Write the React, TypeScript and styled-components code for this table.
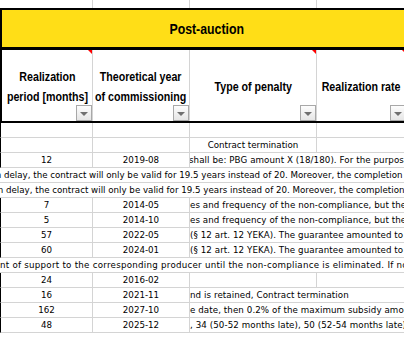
import React from 'react';
import styled, { createGlobalStyle } from 'styled-components';

const GRID = '#d4d4d4';
const COLUMNS = '93px 97px 127px 90px 60px';

const GlobalStyle = createGlobalStyle`
  html, body {
    margin: 0;
    padding: 0;
    background: #fff;
  }
`;

const Sheet = styled.div`
  width: 404px;
  height: 337px;
  overflow: hidden;
  background: #fff;
  color: #000;
  font-family: 'DejaVu Sans', Verdana, sans-serif;
`;

const Row = styled.div<{ $height: number }>`
  display: grid;
  grid-template-columns: ${COLUMNS};
  height: ${(p) => p.$height}px;
`;

const BlankCell = styled.div`
  border-right: 1px solid ${GRID};
`;

const Band = styled.div`
  height: 42px;
  box-sizing: border-box;
  border-top: 2px solid #000;
  border-bottom: 3px solid #000;
  border-left: 2px solid #000;
  background: #ffde17;
  display: flex;
  align-items: center;
  justify-content: center;
`;

// narrow bold face, close to the sheet's Calibri
const NarrowBold = styled.span`
  display: inline-block;
  white-space: nowrap;
  font-family: 'Liberation Sans', Arial, sans-serif;
  font-weight: bold;
  transform: scaleX(0.82);
`;

const BandTitle = styled(NarrowBold)`
  font-size: 15px;
  padding-left: 8px;
`;

const HeaderRow = styled(Row)`
  box-sizing: border-box;
  border-bottom: 2px solid #000;
`;

const HeadCell = styled.div<{ $first?: boolean }>`
  position: relative;
  box-sizing: border-box;
  border-right: 1px solid ${GRID};
  border-left: ${(p) => (p.$first ? '2px solid #000' : 'none')};
  display: flex;
  align-items: center;
  justify-content: center;
  padding-top: 3px;
  text-align: center;
`;

const HeadText = styled(NarrowBold)`
  font-size: 13px;
  line-height: 20px;
`;

const NoteMark = styled.span`
  position: absolute;
  top: 0;
  right: 0;
  width: 0;
  height: 0;
  border-top: 4px solid #ff0000;
  border-left: 4px solid transparent;
`;

const FilterButton = styled.span`
  position: absolute;
  right: 0;
  bottom: 0;
  width: 16px;
  height: 16px;
  box-sizing: border-box;
  border: 1px solid #a8a8a8;
  background: linear-gradient(#fdfdfd, #e6e6e6);
  display: flex;
  align-items: center;
  justify-content: center;
  &::after {
    content: '';
    border-left: 4px solid transparent;
    border-right: 4px solid transparent;
    border-top: 4px solid #707070;
    margin-top: 1px;
  }
`;

const DataRow = styled(Row)`
  font-size: 8.7px;
  line-height: 14px;
`;

const Cell = styled.div<{ $first?: boolean }>`
  box-sizing: border-box;
  border-bottom: 1px solid ${GRID};
  border-right: 1px solid ${GRID};
  border-left: ${(p) => (p.$first ? '1px solid #000' : 'none')};
  text-align: center;
  white-space: nowrap;
  overflow: hidden;
`;

const SpillCell = styled.div<{ $from: number }>`
  grid-column: ${(p) => p.$from} / -1;
  box-sizing: border-box;
  border-bottom: 1px solid ${GRID};
  white-space: nowrap;
  overflow: hidden;
  text-align: left;
`;

const SpillText = styled.span<{ $shift: number; $spacing?: number }>`
  display: inline-block;
  margin-left: ${(p) => p.$shift}px;
  letter-spacing: ${(p) => p.$spacing ?? 0}px;
`;

type SheetRow =
  | { kind: 'cells'; period?: string; year?: string; penalty?: string; spill?: boolean; shift?: number }
  | { kind: 'wide'; text: string; shift: number; spacing?: number };

const rows: SheetRow[] = [
  { kind: 'cells' },
  { kind: 'cells', penalty: 'Contract termination' },
  { kind: 'cells', period: '12', year: '2019-08', penalty: 'shall be: PBG amount X (18/180). For the purpose of', spill: true, shift: -1 },
  { kind: 'wide', text: 'in delay, the contract will only be valid for 19.5 years instead of 20. Moreover, the completion of', shift: -6.7 },
  { kind: 'wide', text: 'in delay, the contract will only be valid for 19.5 years instead of 20. Moreover, the completion of', shift: -4.7 },
  { kind: 'cells', period: '7', year: '2014-05', penalty: 'es and frequency of the non-compliance, but the', spill: true, shift: 0 },
  { kind: 'cells', period: '5', year: '2014-10', penalty: 'es and frequency of the non-compliance, but the', spill: true, shift: 0 },
  { kind: 'cells', period: '57', year: '2022-05', penalty: '(§ 12 art. 12 YEKA). The guarantee amounted to', spill: true, shift: 0 },
  { kind: 'cells', period: '60', year: '2024-01', penalty: '(§ 12 art. 12 YEKA). The guarantee amounted to', spill: true, shift: 0 },
  { kind: 'wide', text: 'nt of support to the corresponding producer until the non-compliance is eliminated. If non', shift: 0, spacing: 0.25 },
  { kind: 'cells', period: '24', year: '2016-02' },
  { kind: 'cells', period: '16', year: '2021-11', penalty: 'nd is retained, Contract termination', spill: true, shift: 0 },
  { kind: 'cells', period: '162', year: '2027-10', penalty: 'e date, then 0.2% of the maximum subsidy  amount', spill: true, shift: 0 },
  { kind: 'cells', period: '48', year: '2025-12', penalty: ', 34 (50-52 months late), 50 (52-54 months late)', spill: true, shift: 0 },
];

const headers = [
  { lines: ['Realization', 'period [months]'], note: true },
  { lines: ['Theoretical year', 'of commissioning'], note: false },
  { lines: ['Type of penalty'], note: true },
  { lines: ['Realization rate'], note: true },
];

function renderRow(row: SheetRow, i: number) {
  if (row.kind === 'wide') {
    return (
      <DataRow key={i} $height={15}>
        <SpillCell $from={1}>
          <SpillText $shift={row.shift} $spacing={row.spacing}>{row.text}</SpillText>
        </SpillCell>
      </DataRow>
    );
  }
  return (
    <DataRow key={i} $height={15}>
      <Cell $first>{row.period}</Cell>
      <Cell>{row.year}</Cell>
      {row.spill ? (
        <SpillCell $from={3}>
          <SpillText $shift={row.shift ?? 0} $spacing={0.08}>{row.penalty}</SpillText>
        </SpillCell>
      ) : (
        <>
          <Cell>{row.penalty}</Cell>
          <Cell />
          <Cell />
        </>
      )}
    </DataRow>
  );
}

export default function App() {
  return (
    <>
      <GlobalStyle />
      <Sheet>
        <Row $height={8}>
          <BlankCell />
          <BlankCell />
          <BlankCell />
          <BlankCell />
        </Row>
        <Band>
          <BandTitle>Post-auction</BandTitle>
        </Band>
        <HeaderRow $height={73}>
          {headers.map((h, i) => (
            <HeadCell key={i} $first={i === 0}>
              <HeadText>
                {h.lines.map((l, j) => (
                  <React.Fragment key={j}>
                    {j > 0 && <br />}
                    {l}
                  </React.Fragment>
                ))}
              </HeadText>
              {h.note && <NoteMark />}
              <FilterButton />
            </HeadCell>
          ))}
          <HeadCell />
        </HeaderRow>
        {rows.map(renderRow)}
      </Sheet>
    </>
  );
}
